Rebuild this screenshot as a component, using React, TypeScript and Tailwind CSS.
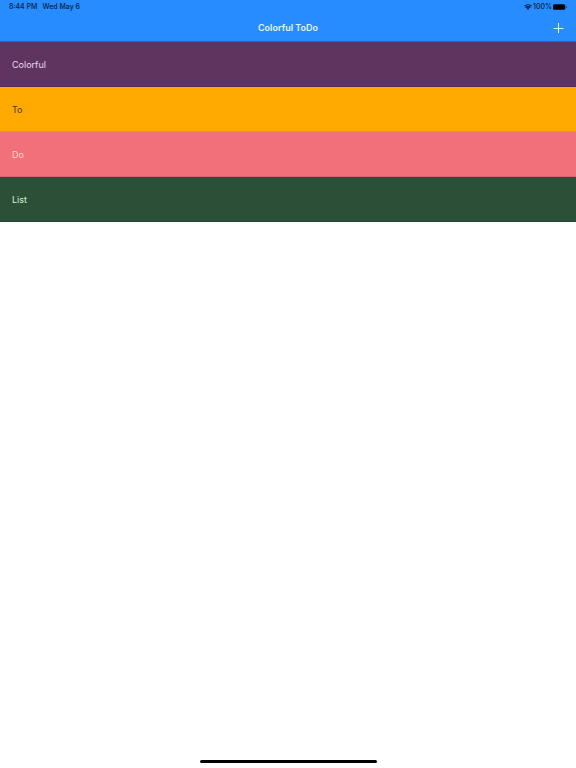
const items = [
  { title: "Colorful", className: "bg-[#5f345f] text-[#ecd8f0]" },
  { title: "To", className: "bg-[#ffaa00] text-[#4a3310]" },
  { title: "Do", className: "bg-[#f2707a] text-[#fbd9cc]" },
  { title: "List", className: "bg-[#2b5037] text-[#d8f0dd]" },
];

function WifiIcon() {
  return (
    <svg viewBox="0 0 16 12" className="h-[6px] w-[8px]" fill="none" stroke="currentColor" strokeWidth="2.8" aria-hidden="true">
      <path d="M1 4.6a10 10 0 0 1 14 0" />
      <path d="M3.6 7.6a6.3 6.3 0 0 1 8.8 0" />
      <path d="M8 12 5.2 9.2a4 4 0 0 1 5.6 0Z" fill="currentColor" stroke="none" />
    </svg>
  );
}

function BatteryIcon() {
  return (
    <svg viewBox="0 0 28 12" className="h-[6px] w-[14px]" aria-hidden="true">
      <rect x="0" y="0.5" width="24.5" height="11" rx="3" fill="currentColor" />
      <path d="M26 3.5c2.4.6 2.4 4.4 0 5Z" fill="currentColor" fillOpacity="0.6" />
    </svg>
  );
}

function StatusBar() {
  return (
    <div className="flex h-[14px] items-center justify-between pr-[9px] pl-[9px] text-[7px] leading-[14px] font-medium text-[#041f40]">
      <div className="flex gap-[5px]">
        <span>8:44 PM</span>
        <span>Wed May 6</span>
      </div>
      <div className="flex items-center gap-px">
        <WifiIcon />
        <span>100%</span>
        <span className="text-black">
          <BatteryIcon />
        </span>
      </div>
    </div>
  );
}

function NavBar() {
  return (
    <div className="grid h-[27px] grid-cols-[1fr_auto_1fr] items-center px-3">
      <h1 className="col-start-2 text-[9px] leading-[14px] font-semibold text-[#e6f6ff]">
        Colorful ToDo
      </h1>
      <button type="button" aria-label="Add" className="justify-self-end text-[#e6f6ff]">
        <svg viewBox="0 0 12 12" className="size-3" stroke="currentColor" strokeWidth="1" aria-hidden="true">
          <path d="M6.5 1v10M1.5 6.5h10" />
        </svg>
      </button>
    </div>
  );
}

export default function App() {
  return (
    <div className="flex min-h-screen flex-col bg-white font-['Inter','Liberation_Sans',sans-serif]">
      <header className="border-b border-[#2c64bd] bg-[#268cff]">
        <StatusBar />
        <NavBar />
      </header>

      <main className="flex-1">
        <ul>
          {items.map((item) => (
            <li
              key={item.title}
              className={`flex h-[45px] items-center border-b border-black/10 px-3 pt-0.5 text-[9px] leading-[14px] ${item.className}`}
            >
              {item.title}
            </li>
          ))}
        </ul>
      </main>

      <footer className="flex justify-center pb-[5px]">
        <div className="h-[3px] w-[177px] rounded-full bg-black" />
      </footer>
    </div>
  );
}
